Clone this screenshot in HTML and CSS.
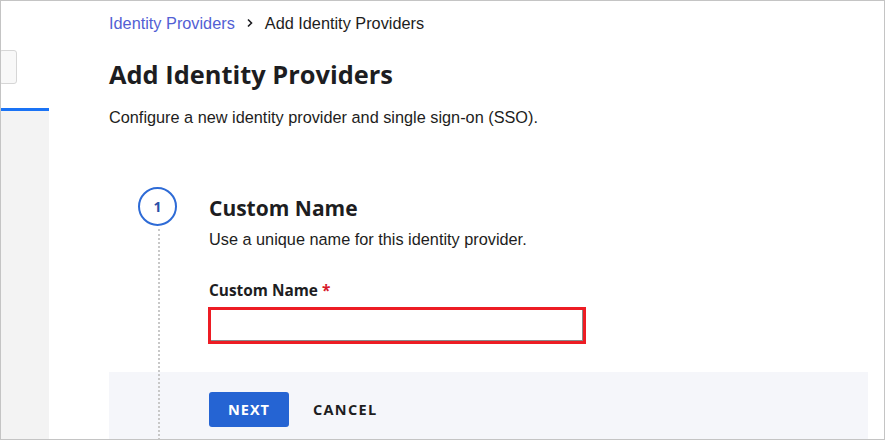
FILE: index.html
```html
<!DOCTYPE html>
<html lang="en">
<head>
<meta charset="utf-8">
<title>Add Identity Providers</title>
<link rel="stylesheet" href="styles.css">
</head>
<body>
<div class="frame">
  <aside class="sidebar">
    <div class="side-top">
      <div class="side-box"></div>
    </div>
    <div class="side-tab"></div>
    <div class="side-rest"></div>
  </aside>
  <main class="main">
    <nav class="crumbs">
      <a class="crumb-link" href="#">Identity Providers</a>
      <svg class="chev" width="8" height="10" viewBox="0 0 8 10"><path d="M2 1.5 L5.5 5 L2 8.5" fill="none" stroke="#1d1d21" stroke-width="1.6"/></svg>
      <span class="crumb-current">Add Identity Providers</span>
    </nav>
    <h1 class="title">Add Identity Providers</h1>
    <p class="desc">Configure a new identity provider and single sign-on (SSO).</p>

    <section class="wizard">
      <div class="step">
        <div class="step-marker"><div class="circle">1</div></div>
        <div class="step-body">
          <h2 class="step-title">Custom Name</h2>
          <p class="step-sub">Use a unique name for this identity provider.</p>
          <label class="field-label">Custom Name <span class="req">*</span></label>
          <div class="field-input"><input type="text" class="input"></div>
        </div>
      </div>
      <div class="footer">
        <button class="btn-next">NEXT</button>
        <button class="btn-cancel">CANCEL</button>
      </div>
    </section>
  </main>
</div>
</body>
</html>
```
FILE: styles.css
```css
html, body {
  margin: 0;
  padding: 0;
  background: #ffffff;
}
body {
  font-family: "Liberation Sans", Arial, sans-serif;
  color: #1d1d21;
}
.frame {
  box-sizing: border-box;
  width: 885px;
  height: 440px;
  border: 1px solid #c4c4c4;
  display: flex;
  overflow: hidden;
}
.sidebar {
  width: 48px;
  flex: none;
  display: flex;
  flex-direction: column;
}
.side-top {
  height: 107px;
  background: #ffffff;
  padding-top: 49px;
  box-sizing: border-box;
}
.side-box {
  width: 18px;
  height: 34px;
  box-sizing: border-box;
  margin-left: -2px;
  background: #f8f8f8;
  border: 1px solid #d6d6d6;
  border-radius: 3px;
}
.side-tab {
  height: 3px;
  background: #1a73f5;
}
.side-rest {
  flex: 1;
  background: #f3f3f3;
}
.main {
  flex: 1;
  padding-left: 60px;
  padding-right: 16px;
}
.crumbs {
  display: flex;
  align-items: center;
  height: 16px;
  margin-top: 14px;
  font-size: 16.3px;
}
.crumb-link {
  color: #5260d4;
  text-decoration: none;
}
.chev {
  margin: 0 11px 0 11px;
}
.crumb-current {
  color: #1d1d21;
}
.title {
  margin: 27px 0 0;
  font-family: "Open Sans", sans-serif;
  font-weight: 700;
  font-size: 25.4px;
  line-height: 32px;
  color: #1d1d21;
}
.desc {
  margin: 17px 0 0;
  font-size: 16.3px;
  line-height: 20px;
}
.wizard {
  position: relative;
  margin-top: 60px;
}
.wizard::before {
  content: "";
  position: absolute;
  left: 49px;
  top: 42px;
  bottom: -20px;
  border-left: 2px dotted #c8c8c8;
}
.step {
  display: grid;
  grid-template-columns: 100px 1fr;
}
.step-marker {
  padding-left: 29px;
}
.circle {
  box-sizing: border-box;
  width: 39px;
  height: 39px;
  border: 2px solid #2e6bd6;
  border-radius: 50%;
  display: flex;
  align-items: center;
  justify-content: center;
  font-family: "Open Sans", sans-serif;
  font-weight: 700;
  font-size: 14px;
  color: #2a4fa8;
}
.step-title {
  margin: 7px 0 0;
  font-family: "Open Sans", sans-serif;
  font-weight: 700;
  font-size: 21px;
  line-height: 28px;
}
.step-sub {
  margin: 7px 0 0;
  font-size: 16.3px;
  line-height: 20px;
}
.field-label {
  display: block;
  margin-top: 32px;
  font-family: "Open Sans", sans-serif;
  font-weight: 700;
  font-size: 15.4px;
  line-height: 20px;
}
.req {
  color: #d7182a;
}
.field-input {
  margin-top: 6px;
  margin-left: -1px;
  width: 378px;
  height: 37px;
  box-sizing: border-box;
  border: 3px solid #ed1c24;
}
.input {
  display: block;
  box-sizing: border-box;
  width: 100%;
  height: 100%;
  border: 0;
  border-right: 1px solid #8a8a8a;
  border-bottom: 1px solid #8a8a8a;
  background: #ffffff;
  outline: none;
}
.footer {
  margin-top: 28px;
  height: 80px;
  background: #f5f6fa;
  padding: 20px 0 0 100px;
  box-sizing: border-box;
  display: flex;
  align-items: flex-start;
  gap: 24px;
}
.btn-next {
  width: 80px;
  height: 35px;
  border: 0;
  border-radius: 3px;
  background: #2564d3;
  color: #ffffff;
  font-family: "Open Sans", sans-serif;
  font-weight: 700;
  font-size: 14.5px;
  letter-spacing: 1px;
  padding: 0;
}
.btn-cancel {
  height: 35px;
  border: 0;
  background: transparent;
  color: #1d1d21;
  font-family: "Open Sans", sans-serif;
  font-weight: 700;
  font-size: 14.5px;
  letter-spacing: 1.3px;
  padding: 0;
}
```
